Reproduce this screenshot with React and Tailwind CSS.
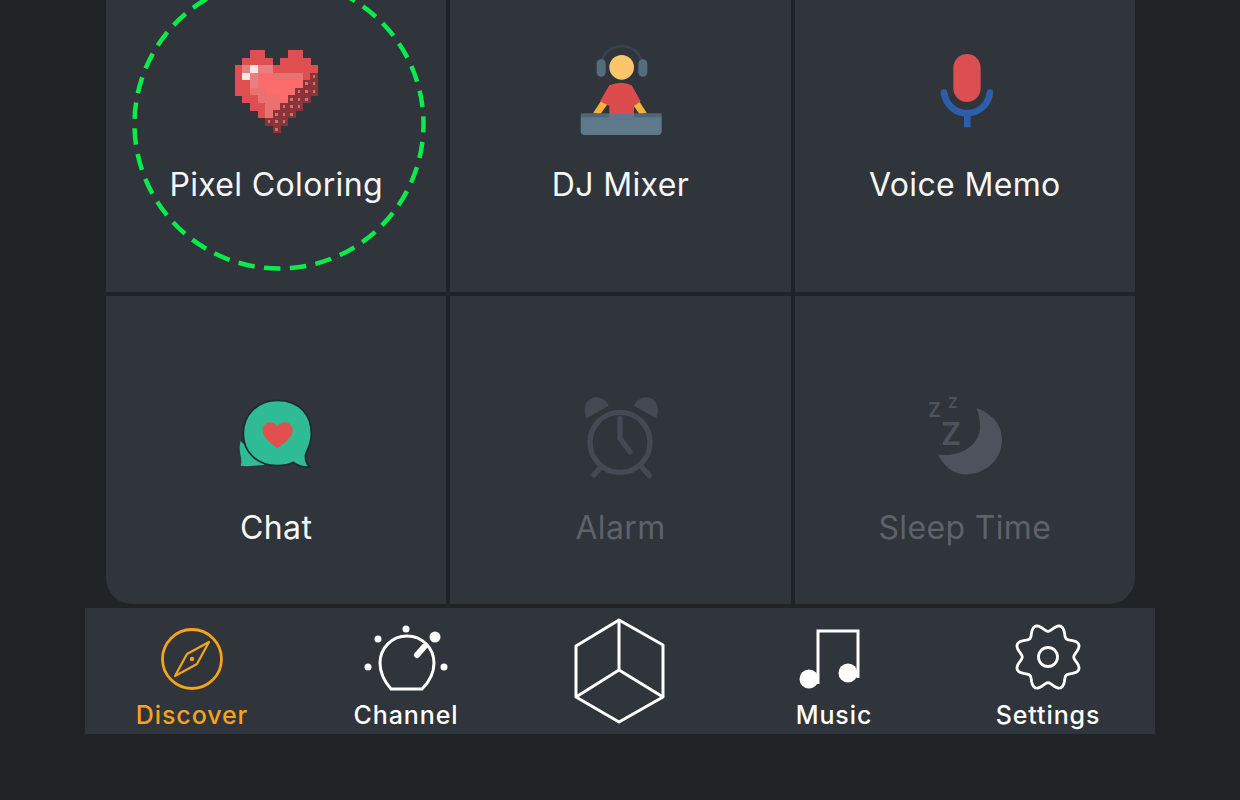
import React from 'react';

const HEART = [
  '..RR...RR..',
  '.RRRR.RRRR.',
  'RPWPPRRRRRR',
  'RWPLLMMMMRD',
  'RRPLLLLLLDD',
  'RRMMLLLLDDD',
  '.RRMMMLDDD.',
  '..RRMMDDD..',
  '...RMDDD...',
  '....DDD....',
  '.....D.....',
];
const HEART_COLORS = { R: '#e04f4f', P: '#e8807f', W: '#fde6e4', L: '#fb6c6d', M: '#e97270', D: '#8e3238' };

const PixelHeart = () => (
  <svg width="120" height="120" viewBox="-25 -26.5 159 159" shapeRendering="crispEdges">
    {HEART.map((row, y) =>
      row.split('').map((c, x) =>
        c === '.' ? null : (
          <g key={`${x}-${y}`}>
            <rect x={x * 10} y={y * 10} width="10.5" height="10.5" fill={HEART_COLORS[c]} />
            {c === 'D' && <rect x={x * 10 + 3.5} y={y * 10 + 3} width="3" height="4" fill="#b87a7a" />}
          </g>
        )
      )
    )}
  </svg>
);

const DjIcon = () => (
  <svg width="120" height="120" viewBox="0 0 360 360">
    <path d="M125 105 C125 30 245 30 245 105" fill="none" stroke="#36444e" strokeWidth="8" />
    <rect x="110" y="88" width="27" height="52" rx="13" fill="#546d7a" />
    <rect x="235" y="88" width="27" height="52" rx="13" fill="#546d7a" />
    <path d="M100 248 L125 210 L143 222 L120 254 Z" fill="#f6b23f" />
    <path d="M260 248 L235 210 L217 222 L240 254 Z" fill="#f6b23f" />
    <path d="M148 262 L148 228 L120 214 L148 166 Q185 150 215 166 L242 214 L222 228 L222 262 Z" fill="#dc4c4c" />
    <circle cx="185" cy="112" r="37" fill="#fbc56b" />
    <rect x="62" y="252" width="243" height="63" rx="12" fill="#5e7a8a" />
    <rect x="62" y="250" width="86" height="12" rx="4" fill="#4f6675" />
    <rect x="222" y="250" width="83" height="12" rx="4" fill="#4f6675" />
  </svg>
);

const MicIcon = () => (
  <svg width="120" height="120" viewBox="-15 0 360 360">
    <path d="M102 188 C115 270 228 270 240 188" fill="none" stroke="#2d5eab" strokeWidth="20" strokeLinecap="round" />
    <path d="M172 250 L172 292" stroke="#2d5eab" strokeWidth="20" />
    <rect x="130" y="72" width="82" height="144" rx="41" fill="#dc4e50" />
  </svg>
);

const ChatIcon = () => (
  <svg width="110" height="100" viewBox="3 0 330 300">
    <path d="M62 168 C52 200 70 220 62 242 C85 246 110 240 135 240 Z" fill="#2fbc94" />
    <path
      d="M172 46 C240 46 274 92 274 146 C274 180 258 200 256 212 C256 226 262 240 270 246 C250 248 232 240 220 232 C205 240 190 242 172 242 C110 242 70 200 70 146 C70 92 110 46 172 46 Z"
      fill="#2fbc94"
      stroke="#1c2a30"
      strokeWidth="5"
    />
    <path d="M172 190 C150 172 128 158 128 135 C128 112 160 102 172 125 C184 102 218 112 218 135 C218 158 194 172 172 190 Z" fill="#e0504f" />
  </svg>
);

const AlarmIcon = () => (
  <svg width="110" height="100" viewBox="-15 0 330 300">
    <g fill="none" stroke="#444953" strokeWidth="16" strokeLinecap="round" strokeLinejoin="round">
      <circle cx="150" cy="172" r="90" />
      <path d="M150 100 L150 160 L180 200" />
      <path d="M92 246 L72 270" />
      <path d="M215 246 L238 272" />
    </g>
    <path d="M50 100 C32 62 58 30 88 38 C102 42 114 52 116 62 Z" fill="#444953" />
    <path d="M258 100 C276 62 250 30 220 38 C206 42 194 52 192 62 Z" fill="#444953" />
  </svg>
);

const SleepIcon = () => (
  <svg width="110" height="100" viewBox="0 0 110 100">
    <path d="M66.5 23 C85 30 92 42 92 55 C92 75 75 89.5 55 89.5 C43 89.5 33 80 28 69.5 C50 73 70 60 70 42 C70 35 69 29 66.5 23 Z" fill="#4e525c" />
    <g fill="#4e525c" fontFamily="Inter, sans-serif" fontWeight="600">
      <text x="31" y="60" fontSize="31">Z</text>
      <text x="18" y="32" fontSize="20">Z</text>
      <text x="38" y="23" fontSize="15">Z</text>
    </g>
  </svg>
);

const CompassIcon = () => (
  <svg width="66" height="66" viewBox="0 0 66 66" fill="none" stroke="#f5a31b" strokeWidth="2.8">
    <circle cx="33" cy="33" r="29.5" />
    <path d="M50 16 L38 38 L16 50 L28 28 Z" strokeWidth="2.2" strokeLinejoin="round" />
    <circle cx="33" cy="33" r="2.2" fill="#f5a31b" stroke="none" />
  </svg>
);

const KnobIcon = () => (
  <svg width="90" height="76" viewBox="-1 -3 90 76">
    <path d="M29 70 L60 70 C68 62 72 54 72 44 C72 29 60 17 45 17 C30 17 18 29 18 44 C18 54 22 62 29 70 Z" fill="none" stroke="#fff" strokeWidth="3" />
    <path d="M55 36 L62 28" stroke="#fff" strokeWidth="6" strokeLinecap="round" />
    <g fill="#fff">
      <circle cx="44" cy="10" r="3.5" />
      <circle cx="16" cy="20" r="3.5" />
      <circle cx="6" cy="48" r="3.5" />
      <circle cx="82" cy="48" r="3.5" />
      <circle cx="73" cy="18" r="5.5" />
    </g>
  </svg>
);

const CubeIcon = () => (
  <svg width="92" height="106" viewBox="1 0 92 106" fill="none" stroke="#fff" strokeWidth="3" strokeLinejoin="round">
    <path d="M46 2 L90 27 L90 79 L46 104 L3 79 L3 28 Z" />
    <path d="M46 2 L46 52 M46 52 L3 79 M46 52 L90 79" />
  </svg>
);

const MusicIcon = () => (
  <svg width="72" height="64" viewBox="0 0 72 64">
    <path d="M20 56 L20 3 L60 3 L60 50" fill="none" stroke="#fff" strokeWidth="3" />
    <circle cx="11" cy="51" r="9.5" fill="#fff" />
    <circle cx="50" cy="45" r="9.5" fill="#fff" />
  </svg>
);

// wavy 8-lobed outline, sampled in polar coords
const gearPath = () => {
  const pts = [];
  for (let i = 0; i < 96; i++) {
    const a = (i / 96) * Math.PI * 2;
    const r = 29.5 + 3.8 * Math.cos(8 * a + Math.PI);
    pts.push(`${(35 + r * Math.sin(a)).toFixed(2)} ${(35 - r * Math.cos(a)).toFixed(2)}`);
  }
  return `M${pts.join(' L')} Z`;
};

const GearIcon = () => (
  <svg width="70" height="70" viewBox="0 0 70 70" fill="none" stroke="#fff" strokeWidth="2.8" strokeLinejoin="round">
    <path d={gearPath()} />
    <circle cx="35" cy="35" r="9.5" />
  </svg>
);

const Cell = ({ icon, label, dim, first }) => (
  <div className={`flex flex-col items-center bg-[#30343b] ${first ? 'h-[292px] pt-[30px]' : 'h-[308px] pt-[89px]'}`}>
    <div className={`flex items-center justify-center ${first ? 'h-[120px]' : 'h-[100px]'}`}>{icon}</div>
    <span
      className={`text-[32px] leading-[40px] tracking-[0.35px] ${first ? 'mt-[15px]' : 'mt-[23px]'} ${dim ? 'text-[#5e626a]' : 'text-[#f6f6f6]'}`}
    >
      {label}
    </span>
  </div>
);

const TabItem = ({ icon, label, active }) => (
  <div className="flex flex-col items-center">
    <div className="flex items-end justify-center h-[84px]">{icon}</div>
    <span className={`mt-[6px] text-[25px] leading-[34px] font-[450] tracking-[0.9px] ${active ? 'text-[#f5a31b]' : 'text-white'}`}>{label}</span>
  </div>
);

export default function App() {
  return (
    <div className="relative h-[800px] w-[1240px] overflow-hidden bg-[#202427] font-['Inter',sans-serif]">
      <div className="ml-[106px] w-[1029px] grid grid-cols-3 gap-[4px] overflow-hidden rounded-b-[26px] bg-[#20232a]">
        <Cell first icon={<PixelHeart />} label="Pixel Coloring" />
        <Cell first icon={<DjIcon />} label="DJ Mixer" />
        <Cell first icon={<MicIcon />} label="Voice Memo" />
        <Cell icon={<ChatIcon />} label="Chat" />
        <Cell icon={<AlarmIcon />} label="Alarm" dim />
        <Cell icon={<SleepIcon />} label="Sleep Time" dim />
      </div>

      <div className="mx-[85px] mt-[4px] grid h-[126px] grid-cols-5 bg-[#30343b]">
        <TabItem active icon={<CompassIcon />} label="Discover" />
        <TabItem icon={<KnobIcon />} label="Channel" />
        <div className="flex justify-center pt-[10px]">
          <CubeIcon />
        </div>
        <TabItem icon={<MusicIcon />} label="Music" />
        <TabItem icon={<GearIcon />} label="Settings" />
      </div>

      <svg className="absolute left-[130px] top-[-25px]" width="298" height="298" viewBox="0 0 298 298" fill="none">
        <circle cx="149" cy="149" r="144.5" stroke="#0aec4c" strokeWidth="4.5" strokeDasharray="16.5 9.44" strokeDashoffset="8" />
      </svg>
    </div>
  );
}
